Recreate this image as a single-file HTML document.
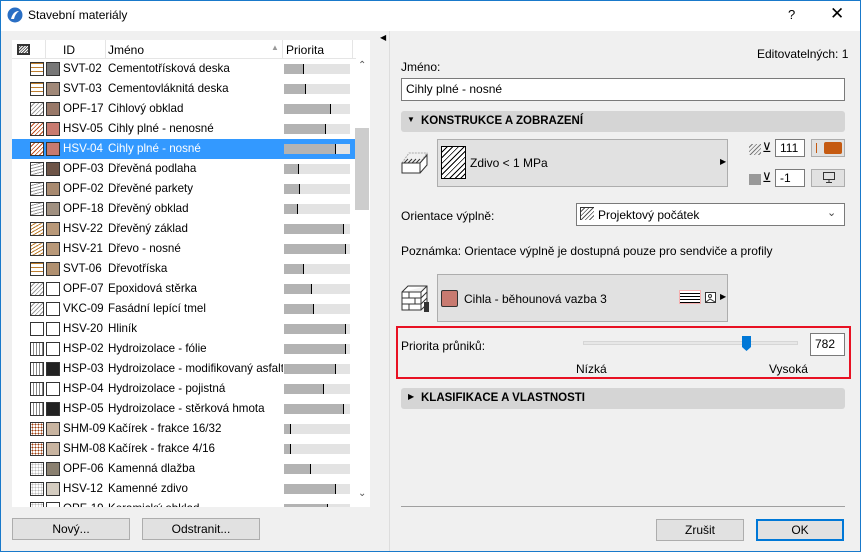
<!DOCTYPE html>
<html><head><meta charset="utf-8">
<style>
*{box-sizing:border-box;margin:0;padding:0}
body{width:861px;height:552px;overflow:hidden;background:#f0f0f0;font-family:"Liberation Sans","DejaVu Sans",sans-serif;font-size:12px;color:#000;position:relative}
.a{position:absolute}
.win{position:absolute;left:0;top:0;width:861px;height:552px;border:1px solid #1979ca}
.title{left:1px;top:1px;width:859px;height:30px;background:#fff}
.row{position:absolute;left:0;width:344px;height:20px;line-height:20px;font-size:11.6px}
.row.sel{background:#3399ff;color:#fff}
.p1{position:absolute;left:18px;top:3px;width:14px;height:14px;border:1px solid #333}
.p2{position:absolute;left:34px;top:3px;width:14px;height:14px;border:1px solid #333}
.id{position:absolute;left:51px}
.nm{position:absolute;left:96px;white-space:nowrap;width:175px;overflow:hidden}
.bar{position:absolute;left:272px;top:5px;width:66px;height:10px;background:#e3e3e3}
.bar i{position:absolute;left:0;top:0;height:10px;background:#b3b3b3;border-right:1px solid #000}
.btn{position:absolute;background:#e1e1e1;border:1px solid #adadad;text-align:center;line-height:20px}
.inp{position:absolute;background:#fff;border:1px solid #7a7a7a;padding-left:4px}
.hdr{position:absolute;left:401px;width:444px;height:21px;background:#d5d5d5;border-radius:3px;font-weight:bold;font-size:11.5px;line-height:21px;padding-left:20px}
</style></head><body>
<div class="win"></div>
<div class="a title"></div>
<svg class="a" style="left:7px;top:7px" width="16" height="16" viewBox="0 0 16 16"><circle cx="8" cy="8" r="7.5" fill="#2a6fc4"/><path d="M4 12 Q6 4 12 4 Q8 7 7 12Z" fill="#fff"/></svg>
<div class="a" style="left:28px;top:8px;font-size:12px">Stavební materiály</div>
<div class="a" style="left:788px;top:7px;font-size:13px">?</div>
<div class="a" style="left:830px;top:4px;font-size:17px">✕</div>

<div class="a" style="left:12px;top:40px;width:358px;height:467px;background:#fff;overflow:hidden">
 <div class="a" style="left:0;top:0;width:344px;height:19px;border-bottom:1px solid #e5e5e5"></div>
 <div class="a" style="left:5px;top:4px;width:13px;height:11px;border:2px solid #333;background:repeating-linear-gradient(135deg,#fff 0 1px,#555 1px 2px)"></div>
 <div class="a" style="left:33px;top:0;height:19px;border-left:1px solid #e5e5e5"></div>
 <div class="a" style="left:93px;top:0;height:19px;border-left:1px solid #e5e5e5"></div>
 <div class="a" style="left:270px;top:0;height:19px;border-left:1px solid #e5e5e5"></div>
 <div class="a" style="left:340px;top:0;height:19px;border-left:1px solid #e5e5e5"></div>
 <div class="a" style="left:51px;top:3px">ID</div>
 <div class="a" style="left:96px;top:3px">Jméno</div>
 <div class="a" style="left:259px;top:3px;font-size:8px;color:#999">▲</div>
 <div class="a" style="left:274px;top:3px">Priorita</div>
 <div class="a" style="left:0;top:19px;width:344px;height:448px" id="rows"></div>
 <div class="a" style="left:343px;top:19px;width:15px;height:448px;background:#fff"></div>
 <div class="a" style="left:343px;top:88px;width:14px;height:82px;background:#cdcdcd"></div>
 <div class="a" style="left:346px;top:20px;font-size:10px;color:#555">⌃</div>
 <div class="a" style="left:346px;top:448px;font-size:10px;color:#555">⌄</div>
</div>
<script>
var d=[["SVT-02","Cementotřísková deska",20,"#777","b"],["SVT-03","Cementovláknitá deska",22,"#a08878","b"],["OPF-17","Cihlový obklad",47,"#987868","h"],["HSV-05","Cihly plné - nenosné",42,"#c87a70","o"],["HSV-04","Cihly plné - nosné",52,"#c87a70","o"],["OPF-03","Dřevěná podlaha",15,"#6e5548","w"],["OPF-02","Dřevěné parkety",16,"#a88a70","w"],["OPF-18","Dřevěný obklad",14,"#a09080","w"],["HSV-22","Dřevěný základ",60,"#b89878","y"],["HSV-21","Dřevo - nosné",62,"#b89878","y"],["SVT-06","Dřevotříska",20,"#b09070","b"],["OPF-07","Epoxidová stěrka",28,"#fff","h"],["VKC-09","Fasádní lepící tmel",30,"#fff","h"],["HSV-20","Hliník",62,"#fff","n"],["HSP-02","Hydroizolace - fólie",62,"#fff","v"],["HSP-03","Hydroizolace - modifikovaný asfalt",52,"#222","v"],["HSP-04","Hydroizolace - pojistná",40,"#fff","v"],["HSP-05","Hydroizolace - stěrková hmota",60,"#222","v"],["SHM-09","Kačírek - frakce 16/32",7,"#c8b4a0","d"],["SHM-08","Kačírek - frakce 4/16",7,"#c8b4a0","d"],["OPF-06","Kamenná dlažba",27,"#8a8070","s"],["HSV-12","Kamenné zdivo",52,"#d4ccc0","s"],["OPF-19","Keramický obklad",44,"#fff","s"]];
var pat={b:"repeating-linear-gradient(0deg,#fff 0 3px,#c08030 3px 4px)",h:"repeating-linear-gradient(135deg,#fff 0 2px,#999 2px 3px)",o:"repeating-linear-gradient(135deg,#fff 0 2px,#c05020 2px 3px)",w:"repeating-linear-gradient(165deg,#fff 0 2px,#999 2px 3px)",y:"repeating-linear-gradient(150deg,#fff 0 2px,#c08030 2px 3px)",n:"#fff",v:"repeating-linear-gradient(90deg,#fff 0 2px,#888 2px 3px)",d:"radial-gradient(#a04010 1px,#fff 1px) 0 0/3px 3px",s:"radial-gradient(#bbb 1px,#fff 1px) 0 0/3px 3px"};
var h="";d.forEach(function(r,i){h+='<div class="row'+(i==4?' sel':'')+'" style="top:'+(i*20)+'px"><div class="p1" style="background:'+pat[r[4]]+'"></div><div class="p2" style="background:'+r[3]+'"></div><span class="id">'+r[0]+'</span><span class="nm">'+r[1]+'</span><div class="bar"><i style="width:'+r[2]+'px"></i></div></div>'});
document.getElementById("rows").innerHTML=h;
</script>
<div class="btn" style="left:12px;top:518px;width:118px;height:22px">Nový...</div>
<div class="btn" style="left:142px;top:518px;width:118px;height:22px">Odstranit...</div>
<div class="a" style="left:380px;top:33px;font-size:8px">◀</div>
<div class="a" style="left:389px;top:31px;width:1px;height:520px;background:#ddd"></div>

<div class="a" style="left:757px;top:47px">Editovatelných: 1</div>
<div class="a" style="left:401px;top:60px">Jméno:</div>
<div class="inp" style="left:401px;top:78px;width:444px;height:23px;line-height:21px">Cihly plné - nosné</div>
<div class="hdr" style="top:111px">KONSTRUKCE A ZOBRAZENÍ</div>
<div class="a" style="left:407px;top:115px;font-size:8px">▼</div>
<svg class="a" style="left:401px;top:151px" width="28" height="26" viewBox="0 0 28 26"><path d="M1 12 L8 2 L26 2 L26 12 M1 12 L19 12 L26 2" fill="none" stroke="#aaa" stroke-dasharray="2 1"/><path d="M1 12 L19 12 L19 22 L1 22Z M19 12 L26 4 L26 14 L19 22" fill="#fff" stroke="#333"/><path d="M3 12l4-4M7 12l4-4M11 12l4-4M15 12l4-4" stroke="#333"/></svg>
<div class="btn" style="left:437px;top:139px;width:291px;height:48px"></div>
<div class="a" style="left:441px;top:146px;width:25px;height:33px;border:1px solid #000;background:repeating-linear-gradient(135deg,#fff 0 3px,#000 3px 4px)"></div>
<div class="a" style="left:470px;top:156px">Zdivo &lt; 1 MPa</div>
<div class="a" style="left:720px;top:157px;font-size:8px">▶</div>
<div class="a" style="left:749px;top:144px;width:12px;height:11px;background:repeating-linear-gradient(135deg,#eee 0 2px,#777 2px 3px)"></div>
<div class="a" style="left:762px;top:140px;font-size:13px">⊻</div>
<div class="inp" style="left:775px;top:139px;width:30px;height:18px;line-height:16px">111</div>
<div class="btn" style="left:811px;top:139px;width:34px;height:18px"></div>
<div class="a" style="left:816px;top:143px;width:1px;height:10px;background:#c55a11"></div>
<div class="a" style="left:824px;top:142px;width:18px;height:12px;background:#c55a11;border-radius:2px"></div>
<div class="a" style="left:749px;top:174px;width:12px;height:11px;background:#999"></div>
<div class="a" style="left:762px;top:170px;font-size:13px">⊻</div>
<div class="inp" style="left:775px;top:169px;width:30px;height:18px;line-height:16px">-1</div>
<div class="btn" style="left:811px;top:169px;width:34px;height:18px"></div>
<svg class="a" style="left:822px;top:171px" width="14" height="13"><rect x="1.5" y="1.5" width="11" height="7" fill="none" stroke="#333"/><path d="M7 9v2M4 11.5h6" stroke="#333"/></svg>
<div class="a" style="left:401px;top:209px">Orientace výplně:</div>
<div class="inp" style="left:576px;top:203px;width:269px;height:23px"></div>
<div class="a" style="left:580px;top:207px;width:14px;height:13px;border-left:1px solid #333;border-top:1px solid #333;background:repeating-linear-gradient(135deg,#fff 0 2px,#555 2px 3px)"></div>
<div class="a" style="left:598px;top:208px">Projektový počátek</div>
<div class="a" style="left:827px;top:206px;font-size:11px;color:#444">⌄</div>
<div class="a" style="left:401px;top:244px">Poznámka: Orientace výplně je dostupná pouze pro sendviče a profily</div>
<svg class="a" style="left:401px;top:284px" width="30" height="30" viewBox="0 0 30 30"><path d="M1 8 L7 2 L26 2 L26 20 L20 26 L1 26Z M1 8 L20 8 L26 2 M20 8 L20 26" fill="#fff" stroke="#333"/><path d="M1 14h19M1 20h19M8 8v6M14 14v6M8 20v6M20 14l6-6M20 20l6-6" stroke="#333"/><rect x="23" y="18" width="5" height="10" fill="#333"/></svg>
<div class="btn" style="left:437px;top:274px;width:291px;height:48px"></div>
<div class="a" style="left:441px;top:290px;width:17px;height:17px;border:1px solid #333;border-radius:2px;background:#c87a70"></div>
<div class="a" style="left:464px;top:292px">Cihla - běhounová vazba 3</div>
<div class="a" style="left:679px;top:290px;width:22px;height:14px;border:1px solid #f5b0b0;background:repeating-linear-gradient(0deg,#000 0 1px,#fff 1px 3px)"></div>
<svg class="a" style="left:704px;top:290px" width="14" height="14"><rect x="1.5" y="2.5" width="10" height="10" fill="#fff" stroke="#333"/><circle cx="6" cy="6" r="1.5" fill="none" stroke="#333"/><path d="M2 12l4-3 5 3" fill="none" stroke="#333"/></svg>
<div class="a" style="left:720px;top:292px;font-size:8px">▶</div>
<div class="a" style="left:396px;top:326px;width:455px;height:53px;border:2px solid #e81123"></div>
<div class="a" style="left:401px;top:339px">Priorita průniků:</div>
<div class="a" style="left:583px;top:341px;width:215px;height:4px;background:#e7e7e7;border:1px solid #d6d6d6"></div>
<svg class="a" style="left:742px;top:336px" width="9" height="16"><path d="M0 0h9v11l-4.5 4L0 11z" fill="#0078d7"/></svg>
<div class="inp" style="left:810px;top:333px;width:35px;height:23px;line-height:21px">782</div>
<div class="a" style="left:576px;top:362px">Nízká</div>
<div class="a" style="left:769px;top:362px">Vysoká</div>
<div class="hdr" style="top:388px">KLASIFIKACE A VLASTNOSTI</div>
<div class="a" style="left:408px;top:392px;font-size:8px">▶</div>
<div class="a" style="left:401px;top:506px;width:444px;height:1px;background:#a0a0a0"></div>
<div class="btn" style="left:656px;top:519px;width:88px;height:22px">Zrušit</div>
<div class="btn" style="left:756px;top:519px;width:88px;height:22px;border:2px solid #0078d7;line-height:18px">OK</div>
</body></html>
